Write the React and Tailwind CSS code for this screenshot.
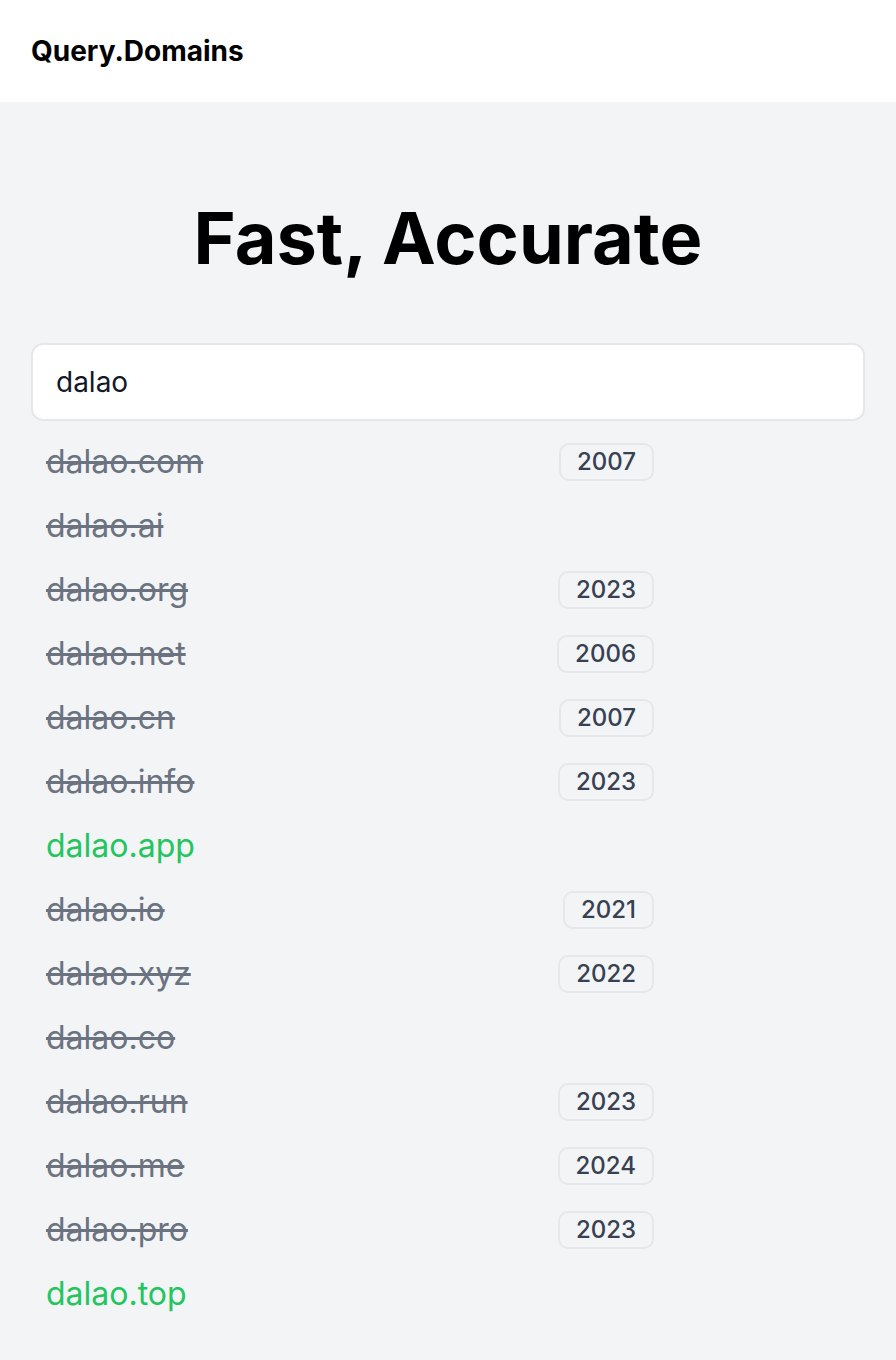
const domains = [
  { name: 'dalao.com', taken: true, year: '2007' },
  { name: 'dalao.ai', taken: true },
  { name: 'dalao.org', taken: true, year: '2023' },
  { name: 'dalao.net', taken: true, year: '2006' },
  { name: 'dalao.cn', taken: true, year: '2007' },
  { name: 'dalao.info', taken: true, year: '2023' },
  { name: 'dalao.app', taken: false },
  { name: 'dalao.io', taken: true, year: '2021' },
  { name: 'dalao.xyz', taken: true, year: '2022' },
  { name: 'dalao.co', taken: true },
  { name: 'dalao.run', taken: true, year: '2023' },
  { name: 'dalao.me', taken: true, year: '2024' },
  { name: 'dalao.pro', taken: true, year: '2023' },
  { name: 'dalao.top', taken: false },
]

export default function App() {
  return (
    <div className="min-h-[1360px] bg-[#f3f4f6] font-['Inter',sans-serif]">
      <header className="flex h-[102px] items-center bg-white px-[31px]">
        <h1 className="text-[28px] font-bold text-black">Query.Domains</h1>
      </header>

      <main className="px-[31px]">
        <h2 className="pt-[100px] text-center text-[72px] font-bold leading-[72px] text-black">Fast, Accurate</h2>

        <div className="mt-[69px] flex h-[78px] items-center rounded-xl border-2 border-[#e5e7eb] bg-white pl-[23px] pr-6">
          <span className="text-[28px] text-[#111827]">dalao</span>
        </div>

        <ul className="mt-[9px]">
          {domains.map((domain) => (
            <li key={domain.name} className="flex h-16 items-center pl-[15px]">
              <span
                className={
                  domain.taken
                    ? 'flex-1 text-[32px] leading-[64px] text-[#6b7280] line-through'
                    : 'flex-1 text-[32px] leading-[64px] text-[#22c55e]'
                }
              >
                {domain.name}
              </span>
              {domain.year && (
                <span className="flex h-[38px] items-center rounded-[10px] border-2 border-[#e5e7eb] bg-[#f3f4f6] px-4 text-2xl font-medium text-[#374151]">
                  {domain.year}
                </span>
              )}
              <span className="w-[211px]" />
            </li>
          ))}
        </ul>
      </main>
    </div>
  )
}
